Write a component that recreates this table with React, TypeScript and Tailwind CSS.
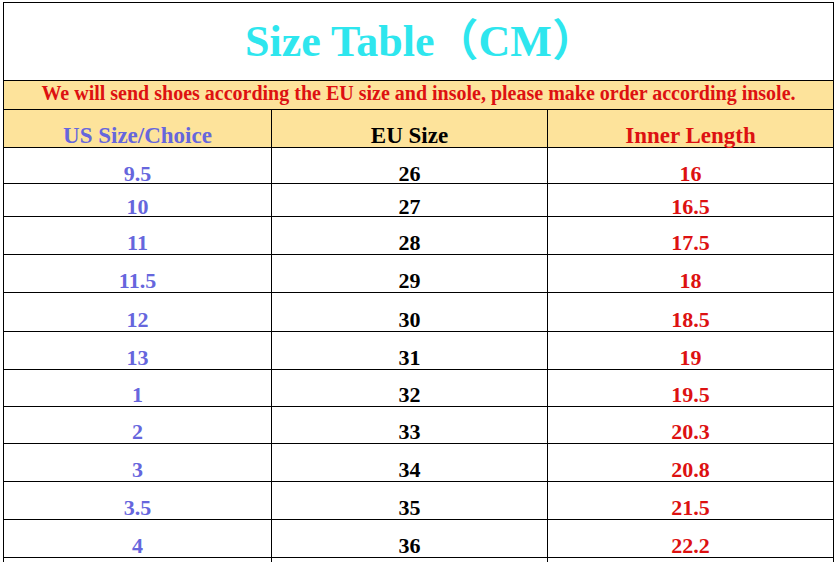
import React from "react";

type Row = {
  us: string;
  eu: string;
  inner: string;
  h: string;
  pb: string;
};

const rows: Row[] = [
  { us: "9.5", eu: "26", inner: "16", h: "h-[36px]", pb: "pb-0" },
  { us: "10", eu: "27", inner: "16.5", h: "h-[33px]", pb: "pb-0" },
  { us: "11", eu: "28", inner: "17.5", h: "h-[38px]", pb: "pb-[2px]" },
  { us: "11.5", eu: "29", inner: "18", h: "h-[38px]", pb: "pb-[2px]" },
  { us: "12", eu: "30", inner: "18.5", h: "h-[39px]", pb: "pb-[2px]" },
  { us: "13", eu: "31", inner: "19", h: "h-[38px]", pb: "pb-[2px]" },
  { us: "1", eu: "32", inner: "19.5", h: "h-[37px]", pb: "pb-[2px]" },
  { us: "2", eu: "33", inner: "20.3", h: "h-[37px]", pb: "pb-[2px]" },
  { us: "3", eu: "34", inner: "20.8", h: "h-[38px]", pb: "pb-[2px]" },
  { us: "3.5", eu: "35", inner: "21.5", h: "h-[38px]", pb: "pb-[2px]" },
  { us: "4", eu: "36", inner: "22.2", h: "h-[38px]", pb: "pb-[2px]" },
];

const serif = "font-['Liberation_Serif',serif] font-bold";

export default function App() {
  return (
    <div className="min-h-screen bg-white pt-[2px] pl-[3px]">
      <div className={`w-[831px] border-t border-l border-r border-black ${serif}`}>
        {/* title */}
        <div className="h-[78px] flex items-center justify-center border-b border-black">
          <h1 className="text-[44px] leading-none text-[#2ee6ee] font-['Liberation_Serif','Noto_Sans_CJK_SC',serif] pl-[4px]">
            Size Table（CM）
          </h1>
        </div>

        {/* notice */}
        <div className="h-[29px] flex items-start justify-center pt-[2px] bg-[#fde39b] border-b border-black">
          <p className="text-[20px] leading-[20px] text-[#dd1111] whitespace-nowrap">
            We will send shoes according the EU size and insole, please make order according insole.
          </p>
        </div>

        {/* header */}
        <div className="h-[38px] grid grid-cols-[268px_276px_285px] bg-[#fde39b] border-b border-black text-[23px] leading-[18px]">
          <div className="flex items-end justify-center pb-[2px] border-r border-black text-[#6666dd]">
            US Size/Choice
          </div>
          <div className="flex items-end justify-center pb-[2px] border-r border-black text-black">
            EU Size
          </div>
          <div className="flex items-end justify-center pb-[2px] text-[#dd1111]">
            Inner Length
          </div>
        </div>

        {rows.map((r) => (
          <div
            key={r.eu}
            className={`${r.h} grid grid-cols-[268px_276px_285px] border-b border-black text-[22px] leading-[18px]`}
          >
            <div className={`flex items-end justify-center ${r.pb} border-r border-black text-[#6666dd]`}>
              {r.us}
            </div>
            <div className={`flex items-end justify-center ${r.pb} border-r border-black text-black`}>
              {r.eu}
            </div>
            <div className={`flex items-end justify-center ${r.pb} text-[#dd1111]`}>
              {r.inner}
            </div>
          </div>
        ))}

        {/* next row, cut off by the window */}
        <div className="h-[38px] grid grid-cols-[268px_276px_285px]">
          <div className="border-r border-black" />
          <div className="border-r border-black" />
          <div />
        </div>
      </div>
    </div>
  );
}
